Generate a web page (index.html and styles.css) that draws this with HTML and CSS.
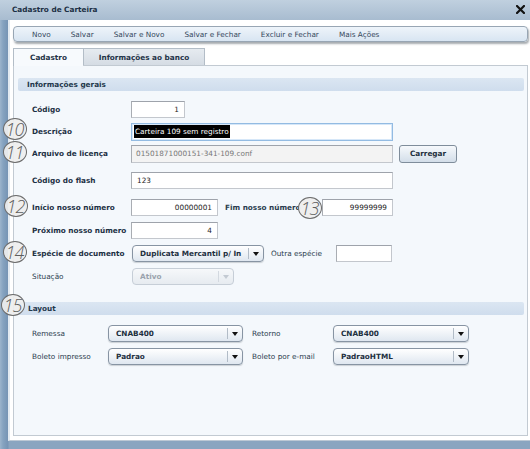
FILE: index.html
```html
<!DOCTYPE html>
<html lang="pt-BR">
<head>
<meta charset="utf-8">
<title>Cadastro de Carteira</title>
<link rel="stylesheet" href="styles.css">
</head>
<body>
<div class="window">
  <div class="titlebar">
    <span class="title">Cadastro de Carteira</span>
    <svg class="close" width="9" height="9" viewBox="0 0 9 9"><path d="M1 1 L8 8 M8 1 L1 8" stroke="#111" stroke-width="2.2" stroke-linecap="square"/></svg>
  </div>
  <div class="frame">
    <div class="toolbar">
      <span class="tb-item">Novo</span>
      <span class="tb-item">Salvar</span>
      <span class="tb-item">Salvar e Novo</span>
      <span class="tb-item">Salvar e Fechar</span>
      <span class="tb-item">Excluir e Fechar</span>
      <span class="tb-item">Mais Ações</span>
    </div>
    <div class="tabs">
      <div class="tab active">Cadastro</div>
      <div class="tab">Informações ao banco</div>
    </div>
    <div class="panel">
      <div class="section-head">Informações gerais</div>
      <div class="section">
        <div class="row first">
          <span class="lbl b">Código</span>
          <div class="input num w-code">1</div>
        </div>
        <div class="row tight">
          <span class="lbl b">Descrição</span>
          <div class="input focus w-long"><span class="sel">Carteira 109 sem registro</span></div>
        </div>
        <div class="row tight">
          <span class="lbl b">Arquivo de licença</span>
          <div class="input readonly w-long">01501871000151-341-109.conf</div>
          <div class="button">Carregar</div>
        </div>
        <div class="row sep">
          <span class="lbl b">Código do flash</span>
          <div class="input w-long">123</div>
        </div>
        <div class="row sep">
          <span class="lbl b">Início nosso número</span>
          <div class="input num w-num">00000001</div>
          <span class="lbl2 b w-fim">Fim nosso número</span>
          <div class="input num w-fimin">99999999</div>
        </div>
        <div class="row">
          <span class="lbl b">Próximo nosso número</span>
          <div class="input num w-num">4</div>
        </div>
        <div class="row">
          <span class="lbl b">Espécie de documento</span>
          <div class="combo w-esp"><span class="val">Duplicata Mercantil p/ In</span><span class="arrow"></span></div>
          <span class="lbl2 w-outra">Outra espécie</span>
          <div class="input w-outrain"></div>
        </div>
        <div class="row">
          <span class="lbl">Situação</span>
          <div class="combo disabled w-sit"><span class="val">Ativo</span><span class="arrow"></span></div>
        </div>
      </div>
      <div class="section-head second">Layout</div>
      <div class="section layout">
        <div class="row first">
          <span class="lbl">Remessa</span>
          <div class="combo w-lay"><span class="val">CNAB400</span><span class="arrow"></span></div>
          <span class="lbl2 w-lay2">Retorno</span>
          <div class="combo w-lay-r"><span class="val">CNAB400</span><span class="arrow"></span></div>
        </div>
        <div class="row">
          <span class="lbl">Boleto impresso</span>
          <div class="combo w-lay"><span class="val">Padrao</span><span class="arrow"></span></div>
          <span class="lbl2 w-lay2">Boleto por e-mail</span>
          <div class="combo w-lay-r"><span class="val">PadraoHTML</span><span class="arrow"></span></div>
        </div>
      </div>
    </div>
  </div>

  <span class="mark m10">10</span>
  <span class="mark m11">11</span>
  <span class="mark m12">12</span>
  <span class="mark m13">13</span>
  <span class="mark m14">14</span>
  <span class="mark m15">15</span>
</div>
</body>
</html>
```
FILE: styles.css
```css
* { box-sizing: border-box; }
html, body { margin: 0; padding: 0; }
body {
  width: 530px;
  height: 449px;
  overflow: hidden;
  background: #8aa5c0;
  font-family: "DejaVu Sans", Verdana, sans-serif;
  font-size: 7.3px;
  color: #1e3246;
}
.window {
  position: relative;
  width: 530px;
  height: 449px;
  background: linear-gradient(90deg, #9cb4cc 0, #86a3c0 3px, #7694b4 8px, #8aa5c0 9px);
}
.titlebar {
  height: 20px;
  display: flex;
  align-items: center;
  justify-content: space-between;
  padding: 0 5px 2px 12px;
  background: linear-gradient(#c0d0df, #a8bcd0);
}
.title { font-weight: bold; color: #1c2f44; }
.close { display: block; margin-top: 1px; }

.frame {
  margin-left: 8px;
  height: 421px;
  background: #fff;
  border-left: 2px solid #e3eaf1;
  border-bottom: 1px solid #bcc8d4;
  padding: 6px 2px 0 3px;
}
.toolbar {
  height: 16px;
  display: flex;
  align-items: center;
  gap: 20px;
  padding-left: 18px;
  border: 1px solid #98a6b4;
  border-radius: 4px;
  background: linear-gradient(#eef4fa, #d8e5f2);
  box-shadow: 1px 2px 2px rgba(60, 70, 80, 0.45);
  color: #34485c;
}
.tabs {
  display: flex;
  margin-top: 6px;
  height: 17px;
  position: relative;
  z-index: 1;
}
.tab {
  height: 17px;
  display: flex;
  align-items: center;
  justify-content: center;
  font-weight: bold;
  color: #1f3347;
  border: 1px solid #b3bdc7;
  border-bottom: none;
  background: linear-gradient(#e6ebf0, #d5dce4);
  width: 122px;
}
.tab.active {
  width: 70px;
  background: #f7fafd;
  height: 18px;
  border-right: none;
}
.panel {
  height: 371px;
  border: 1px solid #c2cad2;
  background: #f4f8fc;
}
.section-head {
  margin: 12px 3px 0 4px;
  height: 13px;
  line-height: 13px;
  padding-left: 9px;
  font-weight: bold;
  color: #23374b;
  border-radius: 2px;
  background: linear-gradient(#dbe6f2, #cfdded);
}
.section-head.second { margin-top: 17px; padding-left: 10px; }
.section { padding-left: 18px; }
.row {
  display: flex;
  align-items: center;
  height: 17px;
  margin-top: 6px;
}
.row.first { margin-top: 10px; }
.row.tight { margin-top: 5px; }
.row.sep { margin-top: 10px; }
.lbl { width: 99px; flex: none; white-space: nowrap; color: #2a3c4e; }
.layout .lbl { width: 76px; }
.b { font-weight: bold; color: #1c3044; }
.lbl2 { flex: none; white-space: nowrap; color: #2a3c4e; }

.input {
  height: 17px;
  flex: none;
  display: flex;
  align-items: center;
  padding: 0 5px 0 5px;
  background: #fff;
  border: 1px solid;
  border-color: #9ea3ab #c3c7cd #c3c7cd #a9adb3;
  color: #222;
  white-space: nowrap;
  overflow: hidden;
}
.input.num { justify-content: flex-end; }
.input.focus {
  height: 18px;
  padding-left: 2px;
  border: 1px solid #93bbe2;
  box-shadow: inset 0 0 0 1px #d6e7f8;
}
.input.readonly {
  height: 18px;
  padding-left: 4px;
  background: #f3f3f3;
  color: #777;
}
.sel {
  background: #000;
  color: #fff;
  line-height: 13px;
  padding: 0 1px;
}
.w-code { width: 54px; }
.w-long { width: 262px; }
.w-num { width: 87px; }
.w-fim { width: 97px; margin-left: 7px; }
.w-fimin { width: 71px; }
.w-esp { width: 132px; margin-left: 1px; }
.w-outra { width: 65px; margin-left: 7px; }
.w-outrain { width: 56px; }
.w-sit { width: 102px; margin-left: 1px; }
.w-lay { width: 135px; }
.w-lay2 { width: 81px; margin-left: 9px; }
.w-lay-r { width: 136px; }

.button {
  margin-left: 6px;
  width: 58px;
  height: 18px;
  display: flex;
  align-items: center;
  justify-content: center;
  font-weight: bold;
  color: #1f3040;
  border: 1px solid #7f8d9b;
  border-radius: 3px;
  background: linear-gradient(#f6f9fc, #d3dee9);
}
.combo {
  flex: none;
  height: 17px;
  display: flex;
  align-items: center;
  padding-left: 7px;
  border: 1px solid #8794a3;
  border-radius: 4px;
  background: linear-gradient(#ffffff, #dfe7f0);
  box-shadow: 0 1px 1px rgba(80, 90, 100, 0.25);
  font-weight: bold;
  color: #1d2f40;
}
.combo .val { flex: 1; white-space: nowrap; overflow: hidden; }
.combo .arrow {
  flex: none;
  width: 15px;
  height: 11px;
  border-left: 1px solid #b2bcc7;
  display: flex;
  align-items: center;
  justify-content: center;
}
.combo .arrow::after {
  content: "";
  border-left: 3px solid transparent;
  border-right: 3px solid transparent;
  border-top: 4px solid #111;
}
.combo.disabled {
  border-color: #c6ced7;
  background: linear-gradient(#f6f8fa, #e6ebf0);
  color: #9aa3ad;
  box-shadow: none;
}
.combo.disabled .arrow { border-left-color: #d3d9e0; }
.combo.disabled .arrow::after { border-top-color: #c3cad2; }

.mark {
  position: absolute;
  width: 24px;
  height: 22px;
  border: 1.5px solid #6a6a6a;
  border-radius: 50%;
  background: rgba(238, 238, 238, 0.92);
  display: flex;
  align-items: center;
  justify-content: center;
  font-family: "Open Sans", "Lato", sans-serif;
  font-weight: 300;
  font-style: italic;
  font-size: 18px;
  letter-spacing: -1px;
  color: #5e5e5e;
  padding-right: 1px;
}
.m10 { left: 3px; top: 118px; }
.m11 { left: 3px; top: 141px; }
.m12 { left: 4px; top: 195px; }
.m13 { left: 298px; top: 197px; }
.m14 { left: 3px; top: 241px; }
.m15 { left: 1px; top: 294px; }
```
